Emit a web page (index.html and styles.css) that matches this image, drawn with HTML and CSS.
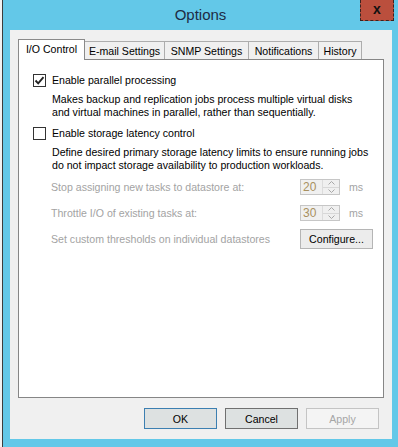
FILE: index.html
```html
<!DOCTYPE html>
<html>
<head>
<meta charset="utf-8">
<link rel="stylesheet" href="styles.css">
</head>
<body>
<div class="desk">
  <div class="strip"></div>
  <div class="window">
    <div class="titlebar">
      <div class="title">Options</div>
      <div class="close">x</div>
    </div>
    <div class="client">
      <div class="tabs">
        <div class="tab tab-active tab-io">I/O Control</div>
        <div class="tab tab-email">E-mail Settings</div>
        <div class="tab tab-snmp">SNMP Settings</div>
        <div class="tab tab-notif">Notifications</div>
        <div class="tab tab-hist">History</div>
      </div>
      <div class="panel">
        <div class="check-row first">
          <span class="checkbox">
            <svg width="11" height="11" viewBox="0 0 11 11"><path d="M1.5 5.5 L4.2 8.3 L9.5 2.2" fill="none" stroke="#222" stroke-width="1.9"/></svg>
          </span>
          <span class="check-label">Enable parallel processing</span>
        </div>
        <div class="desc desc-1">Makes backup and replication jobs process multiple virtual disks<br>and virtual machines in parallel, rather than sequentially.</div>
        <div class="check-row second">
          <span class="checkbox"></span>
          <span class="check-label">Enable storage latency control</span>
        </div>
        <div class="desc desc-2">Define desired primary storage latency limits to ensure running jobs<br>do not impact storage availability to production workloads.</div>
        <div class="opt-row row-stop">
          <span class="opt-label">Stop assigning new tasks to datastore at:</span>
          <div class="spin">
            <span class="spin-value">20</span>
            <span class="spin-arrows">
              <span class="arrow">
                <svg width="7" height="4" viewBox="0 0 7 4"><path d="M0.5 3.5 L3.5 0.5 L6.5 3.5" fill="none" stroke="#a8a8a8" stroke-width="1"/></svg>
              </span>
              <span class="arrow">
                <svg width="7" height="4" viewBox="0 0 7 4"><path d="M0.5 0.5 L3.5 3.5 L6.5 0.5" fill="none" stroke="#a8a8a8" stroke-width="1"/></svg>
              </span>
            </span>
          </div>
          <span class="unit">ms</span>
        </div>
        <div class="opt-row row-throttle">
          <span class="opt-label">Throttle I/O of existing tasks at:</span>
          <div class="spin">
            <span class="spin-value">30</span>
            <span class="spin-arrows">
              <span class="arrow">
                <svg width="7" height="4" viewBox="0 0 7 4"><path d="M0.5 3.5 L3.5 0.5 L6.5 3.5" fill="none" stroke="#a8a8a8" stroke-width="1"/></svg>
              </span>
              <span class="arrow">
                <svg width="7" height="4" viewBox="0 0 7 4"><path d="M0.5 0.5 L3.5 3.5 L6.5 0.5" fill="none" stroke="#a8a8a8" stroke-width="1"/></svg>
              </span>
            </span>
          </div>
          <span class="unit">ms</span>
        </div>
        <div class="opt-row row-custom">
          <span class="opt-label">Set custom thresholds on individual datastores</span>
          <div class="btn btn-configure">Configure...</div>
        </div>
      </div>
      <div class="buttons">
        <div class="btn btn-ok">OK</div>
        <div class="btn btn-cancel">Cancel</div>
        <div class="btn btn-apply">Apply</div>
      </div>
    </div>
  </div>
</div>
</body>
</html>
```

FILE: styles.css
```css
html, body {
  margin: 0;
  padding: 0;
}
body {
  width: 398px;
  height: 447px;
  overflow: hidden;
  font-family: "Liberation Sans", Arial, sans-serif;
  font-size: 10.6px;
  color: #000;
  background: #f4f4f4;
}
.desk {
  display: flex;
  height: 447px;
}
.strip {
  width: 2px;
  background: #f2f2f2;
}
.window {
  flex: 1;
  border-left: 1px solid #3c3c3c;
  background: #63c8e8;
  display: flex;
  flex-direction: column;
}
.titlebar {
  height: 30px;
  display: grid;
  grid-template-columns: 1fr auto 1fr;
  align-items: start;
}
.title {
  grid-column: 2;
  font-size: 15px;
  line-height: 30px;
  color: #1e2b44;
}
.close {
  grid-column: 3;
  justify-self: end;
  margin-right: 4px;
  width: 34px;
  height: 21px;
  box-sizing: border-box;
  background: #bb4f3d;
  border: 1px dashed #3a2420;
  border-top: none;
  display: flex;
  align-items: center;
  justify-content: center;
  font-weight: bold;
  font-size: 14px;
  line-height: 14px;
  padding-bottom: 3px;
  color: #111;
}
.client {
  flex: 1;
  margin: 0 6px 8px 7px;
  background: #f0f0f0;
  padding: 9px 8px 10px 8px;
  display: flex;
  flex-direction: column;
}
.tabs {
  display: flex;
  align-items: flex-end;
  height: 20px;
}
.tab {
  box-sizing: border-box;
  height: 18px;
  border: 1px solid #adadad;
  border-bottom: none;
  background: #f0f0f0;
  margin-left: -1px;
  display: flex;
  align-items: center;
  justify-content: center;
  padding-top: 1px;
  color: #000;
  white-space: nowrap;
}
.tab-active {
  height: 21px;
  margin-left: 0;
  margin-bottom: -1px;
  background: #fff;
  border-color: #8a8a8a;
  position: relative;
  z-index: 1;
  padding-top: 0;
  padding-bottom: 2px;
}
.tab-io { width: 67px; }
.tab-email { width: 81px; }
.tab-snmp { width: 85px; }
.tab-notif { width: 71px; }
.tab-hist { width: 44px; }

.panel {
  flex: 1;
  background: #fff;
  border: 1px solid #868686;
  padding: 14px 0 0 14px;
  display: flex;
  flex-direction: column;
}
.check-row {
  display: flex;
  align-items: center;
  height: 13px;
}
.second {
  margin-top: 8px;
}
.checkbox {
  box-sizing: border-box;
  width: 13px;
  height: 13px;
  border: 1px solid #333;
  background: #fff;
  display: flex;
  align-items: center;
  justify-content: center;
}
.check-label {
  margin-left: 6px;
  line-height: 13px;
  font-size: 10.6px;
}
.desc {
  margin-left: 19px;
  margin-top: 6px;
  line-height: 13px;
}
.opt-row {
  display: grid;
  grid-template-columns: 249px auto auto;
  justify-content: start;
  align-items: center;
  margin-left: 18px;
}
.row-stop {
  margin-top: 7px;
}
.row-throttle {
  margin-top: 10px;
}
.row-custom {
  margin-top: 8px;
}
.opt-label {
  color: #a3a3a3;
}
.spin {
  box-sizing: border-box;
  width: 40px;
  height: 16px;
  border: 1px solid #c6c6c6;
  background: #f0f0f0;
  display: flex;
}
.spin-value {
  flex: 1;
  color: #a89060;
  font-size: 12px;
  line-height: 14px;
  padding-left: 2px;
}
.spin-arrows {
  width: 16px;
  display: flex;
  flex-direction: column;
  border-left: 1px solid #dcdcdc;
}
.arrow {
  flex: 1;
  display: flex;
  align-items: center;
  justify-content: center;
  border: 1px solid #d8d8d8;
  border-width: 0 0 1px 0;
  background: #f0f0f0;
}
.arrow + .arrow {
  border-bottom: none;
}
.unit {
  margin-left: 9px;
  color: #a3a3a3;
}
.btn {
  box-sizing: border-box;
  width: 73px;
  height: 21px;
  border: 1px solid #adadad;
  background: #e1e1e1;
  display: flex;
  align-items: center;
  justify-content: center;
}
.btn-configure {
  height: 20px;
  background: #ececec;
  border-color: #b5b5b5;
}
.buttons {
  display: flex;
  justify-content: flex-end;
  gap: 8px;
  margin-top: 10px;
  padding-right: 5px;
}
.btn-ok {
  border-color: #3c7fb1;
  background: #dde1e1;
}
.btn-cancel {
  border-color: #707070;
  background: #dde1e1;
}
.btn-apply {
  border-color: #c4c4c4;
  background: #f4f4f4;
  color: #a6a6a6;
}
```
